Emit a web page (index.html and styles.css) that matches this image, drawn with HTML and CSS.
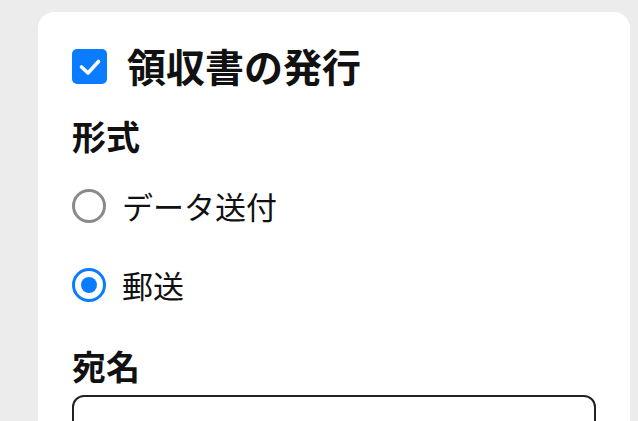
FILE: index.html
```html
<!DOCTYPE html>
<html lang="ja">
<head>
<meta charset="utf-8">
<link rel="stylesheet" href="styles.css">
</head>
<body>
<div class="card">
  <label class="title-row">
    <span class="checkbox">
      <svg viewBox="0 0 35 35" width="35" height="35"><path d="M9.5 18 L16 24 L26.5 12.5" fill="none" stroke="#fff" stroke-width="3.6" stroke-linecap="round" stroke-linejoin="round"/></svg>
    </span>
    <span class="title">領収書の発行</span>
  </label>
  <div class="section-label">形式</div>
  <label class="radio-row first">
    <span class="radio"></span>
    <span class="radio-text">データ送付</span>
  </label>
  <label class="radio-row second">
    <span class="radio checked"><span class="dot"></span></span>
    <span class="radio-text">郵送</span>
  </label>
  <div class="section-label addr">宛名</div>
  <div class="input"></div>
</div>
</body>
</html>
```

FILE: styles.css
```css
html, body {
  margin: 0;
  padding: 0;
  height: 100%;
  overflow: hidden;
}
body {
  background: #ebeceb;
  font-family: "Noto Sans CJK JP", "Noto Sans", sans-serif;
  color: #111;
}
.card {
  margin: 12px 0 0 38px;
  width: 592px;
  height: 460px;
  box-sizing: border-box;
  background: #fff;
  border-radius: 16px;
  padding: 29px 34px 0 34px;
  display: flex;
  flex-direction: column;
}
.title-row {
  display: flex;
  align-items: center;
  gap: 20px;
  height: 48px;
}
.checkbox {
  width: 35px;
  height: 35px;
  margin-top: 2px;
  border-radius: 5px;
  background: #0a7cff;
  display: flex;
  align-items: center;
  justify-content: center;
}
.checkbox svg { display: block; }
.title {
  font-size: 39px;
  font-weight: 700;
  line-height: 48px;
}
.section-label {
  font-size: 34px;
  font-weight: 700;
  line-height: 40px;
  margin-top: 27px;
}
.radio-row {
  display: flex;
  align-items: center;
  gap: 16px;
  height: 48px;
}
.radio-row.first { margin-top: 26px; }
.radio-row.second { margin-top: 31px; }
.radio {
  width: 34px;
  height: 34px;
  box-sizing: border-box;
  border-radius: 50%;
  border: 3px solid #8a8a8a;
  display: flex;
  align-items: center;
  justify-content: center;
}
.radio.checked {
  border: 3.5px solid #0a7cff;
}
.dot {
  width: 16px;
  height: 16px;
  border-radius: 50%;
  background: #0a7cff;
}
.radio-text {
  font-size: 31px;
  line-height: 48px;
}
.section-label.addr { margin-top: 37px; }
.input {
  margin-top: 9px;
  width: 524px;
  height: 56px;
  box-sizing: border-box;
  border: 2px solid #222;
  border-radius: 12px;
}
```
